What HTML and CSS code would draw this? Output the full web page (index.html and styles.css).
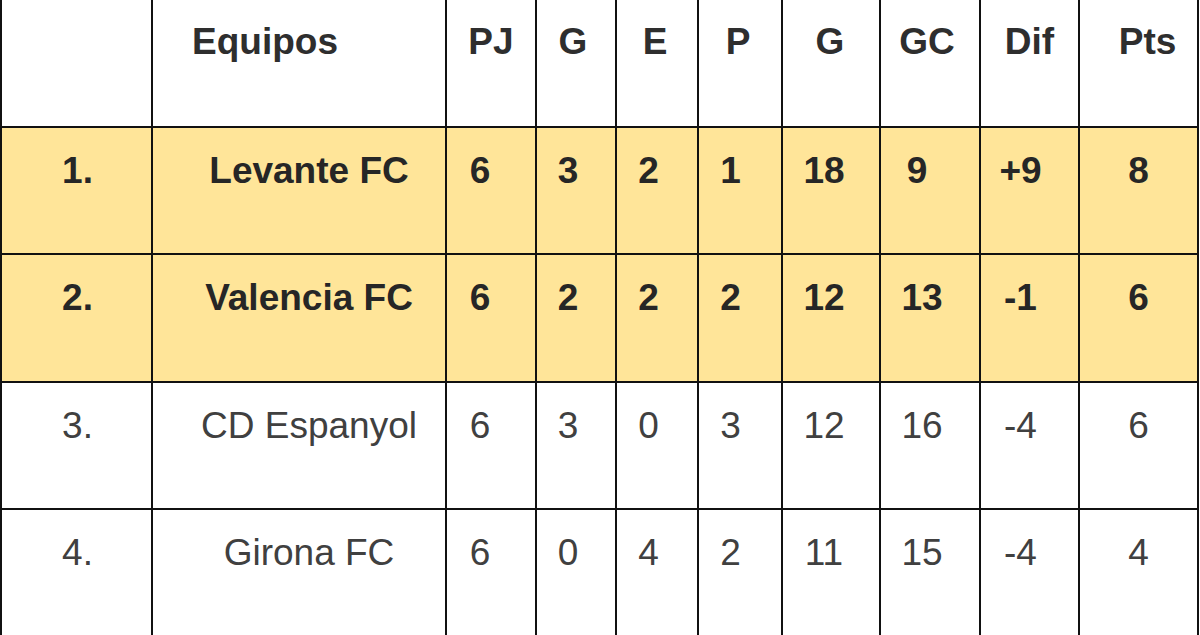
FILE: index.html
```html
<!DOCTYPE html>
<html lang="es">
<head>
<meta charset="utf-8">
<title>Clasificación</title>
<link rel="stylesheet" href="styles.css">
</head>
<body>
<div class="standings" role="table">
  <div class="cell head c1"></div>
  <div class="cell head c2">Equipos</div>
  <div class="cell head c3">PJ</div>
  <div class="cell head c4">G</div>
  <div class="cell head c5">E</div>
  <div class="cell head c6">P</div>
  <div class="cell head c7">G</div>
  <div class="cell head c8">GC</div>
  <div class="cell head c9">Dif</div>
  <div class="cell head c10">Pts</div>

  <div class="cell top c1">1.</div>
  <div class="cell top c2">Levante FC</div>
  <div class="cell top c3">6</div>
  <div class="cell top c4">3</div>
  <div class="cell top c5">2</div>
  <div class="cell top c6">1</div>
  <div class="cell top c7">18</div>
  <div class="cell top c8 single">9</div>
  <div class="cell top c9">+9</div>
  <div class="cell top c10">8</div>

  <div class="cell top c1">2.</div>
  <div class="cell top c2">Valencia FC</div>
  <div class="cell top c3">6</div>
  <div class="cell top c4">2</div>
  <div class="cell top c5">2</div>
  <div class="cell top c6">2</div>
  <div class="cell top c7">12</div>
  <div class="cell top c8">13</div>
  <div class="cell top c9">-1</div>
  <div class="cell top c10">6</div>

  <div class="cell c1">3.</div>
  <div class="cell c2">CD Espanyol</div>
  <div class="cell c3">6</div>
  <div class="cell c4">3</div>
  <div class="cell c5">0</div>
  <div class="cell c6">3</div>
  <div class="cell c7">12</div>
  <div class="cell c8">16</div>
  <div class="cell c9">-4</div>
  <div class="cell c10">6</div>

  <div class="cell c1">4.</div>
  <div class="cell c2">Girona FC</div>
  <div class="cell c3">6</div>
  <div class="cell c4">0</div>
  <div class="cell c5">4</div>
  <div class="cell c6">2</div>
  <div class="cell c7">11</div>
  <div class="cell c8">15</div>
  <div class="cell c9">-4</div>
  <div class="cell c10">4</div>
</div>
</body>
</html>
```

FILE: styles.css
```css
html, body {
  margin: 0;
  padding: 0;
  background: #ffffff;
  overflow: hidden;
}

.standings {
  display: grid;
  grid-template-columns: 149px 292px 88px 78px 80px 82px 96px 98px 97px 117px;
  grid-template-rows: 126px 125px 126px 125px 125px;
  gap: 2px;
  padding: 0 2px 2px 2px;
  width: max-content;
  background: #111111;
  font-family: "Liberation Sans", Arial, sans-serif;
  font-size: 37px;
  line-height: 42px;
  color: #404040;
}

.cell {
  background: #ffffff;
  text-align: center;
  padding-top: 22px;
  white-space: nowrap;
  box-sizing: border-box;
}

.head {
  font-weight: bold;
  color: #2e2e2e;
  padding-top: 21px;
}

.top {
  background: #ffe599;
  font-weight: bold;
  color: #262626;
}

/* data cell horizontal offsets */
.c1 { padding-left: 2px; }
.c2 { padding-left: 20px; }
.c3 { padding-right: 22px; }
.c4 { padding-right: 16px; }
.c5 { padding-right: 17px; }
.c6 { padding-right: 19px; }
.c7 { padding-right: 14px; }
.c8 { padding-right: 16px; }
.c8.single { padding-right: 26px; }
.c9 { padding-right: 18px; }

/* header offsets */
.head.c2 { padding-left: 0; padding-right: 68px; }
.head.c3 { padding-right: 0; }
.head.c4 { padding-right: 6px; }
.head.c5 { padding-right: 4px; }
.head.c6 { padding-right: 4px; }
.head.c7 { padding-right: 2px; }
.head.c8 { padding-right: 6px; }
.head.c9 { padding-right: 0; }
.head.c10 { padding-left: 18px; }
```
